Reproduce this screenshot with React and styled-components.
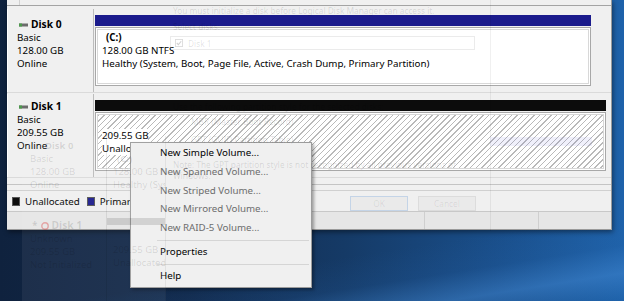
import React from 'react';
import styled, { createGlobalStyle } from 'styled-components';

const Global = createGlobalStyle`
  html, body { margin: 0; padding: 0; }
  body {
    width: 624px; height: 301px; overflow: hidden;
    font-family: "Noto Sans", "DejaVu Sans", sans-serif;
    font-size: 9.75px; color: #000;
  }
`;

const Desktop = styled.div`
  position: relative;
  width: 624px;
  height: 301px;
  overflow: hidden;
  box-sizing: border-box;
  padding-left: 7px;
  background:
    linear-gradient(-9deg, rgba(0,0,0,0) 0%, rgba(70,140,215,0.45) 7%, rgba(40,100,170,0.15) 14%, rgba(0,0,0,0) 22%),
    linear-gradient(90deg, #0f223e 0%, #122a4c 30%, #153a66 55%, #194d88 78%, #1e62aa 100%);
`;

const Window = styled.div`
  width: 605px;
  height: 230px;
  box-sizing: border-box;
  background: #f0f0f0;
  border-right: 1px solid #9a9a9a;
  border-bottom: 1px solid #9a9a9a;
  display: flex;
  flex-direction: column;
  box-shadow: 1px 2px 5px rgba(0,0,0,0.45);
`;

const TopStrip = styled.div`
  height: 5px;
  flex: none;
  border-bottom: 1px solid #a4a4a4;
  display: flex;
`;

const TopCol = styled.div`
  width: 12px;
  border-right: 1px solid #d2d2d2;
`;

const DiskList = styled.div`
  display: flex;
  flex-direction: column;
  gap: 1px;
  padding-top: 3px;
  height: 179px;
  flex: none;
  box-sizing: border-box;
  border-bottom: 1px solid #c4c4c4;
`;

const DiskRow = styled.div`
  display: flex;
  height: 83px;
  flex: none;
  border-bottom: 1px solid #dadada;
`;

const Label = styled.div`
  width: 87px;
  flex: none;
  box-sizing: border-box;
  padding: ${p => p.$top}px 0 0 9px;
  border-right: 1px solid #bcbcbc;
  border-left: 1px solid #ffffff;
  line-height: 13px;
`;

const DiskName = styled.div`
  display: flex;
  align-items: center;
  gap: 3px;
  font-weight: 700;
  font-size: 10.25px;
  margin-left: 2px;
`;

const Line = styled.div`
  white-space: nowrap;
  ${p => p.$bold && 'font-weight: 700;'}
  ${p => p.$indent && `padding-left: ${p.$indent}px;`}
`;

const Parts = styled.div`
  display: flex;
  flex-direction: column;
  padding: 6px 0 0 1px;
  width: ${p => p.$w}px;
`;

const Bar = styled.div`
  height: 11px;
  background: ${p => p.$color};
`;

const Box = styled.div`
  margin-top: 1px;
  height: 59px;
  box-sizing: border-box;
  border: 1px solid #a8a8a8;
  box-shadow: inset 0 0 0 1px #ffffff, inset 0 0 0 2px #d8d8d8;
  padding: 3px 0 0 6px;
  line-height: 13px;
  background: ${p => p.$hatch
    ? 'repeating-linear-gradient(135deg, #ffffff 0px, #ffffff 3px, #b9b9b9 3px, #b9b9b9 4px)'
    : '#ffffff'};
`;

const PartText = styled.span`
  background: #ffffff;
`;

const Spacer = styled.div`
  height: 5px;
  flex: none;
`;

const Legend = styled.div`
  height: 22px;
  flex: none;
  box-sizing: border-box;
  border-top: 1px solid #d0d0d0;
  border-bottom: 1px solid #c8c8c8;
  display: flex;
  align-items: center;
  padding-left: 5px;
  gap: 5px;
`;

const Swatch = styled.span`
  width: 8px;
  height: 9px;
  background: ${p => p.$color};
  border: 1px solid #555;
  box-sizing: border-box;
  margin-left: ${p => p.$gap || 0}px;
`;

const Status = styled.div`
  flex: 1;
  display: flex;
  background: #e6e6e6;
`;

const StatusCell = styled.div`
  width: ${p => p.$w}px;
  border-right: 1px solid #cfcfcf;
`;

const Menu = styled.div`
  position: absolute;
  left: 130px;
  top: 142px;
  width: 182px;
  height: 146px;
  box-sizing: border-box;
  background: #f0f0f0;
  border: 1px solid #9c9c9c;
  box-shadow: 2px 2px 3px rgba(0,0,0,0.35);
  padding: 1px 2px 1px 2px;
  display: flex;
  flex-direction: column;
`;

const Item = styled.div`
  height: 18.75px;
  line-height: 18.75px;
  padding-left: 27px;
  color: ${p => (p.$disabled ? '#6d6d6d' : '#000')};
  white-space: nowrap;
`;

const Sep = styled.div`
  height: 7px;
  display: flex;
  align-items: center;
  padding-left: 24px;
  &::after {
    content: '';
    flex: 1;
    height: 1px;
    background: #d5d5d5;
  }
`;

/* ghosts of a fading window, laid over everything */
const Ghost = styled.div`
  position: absolute;
  left: ${p => p.$x}px;
  top: ${p => p.$y}px;
  width: ${p => p.$w}px;
  height: ${p => p.$h}px;
  overflow: hidden;
  box-sizing: border-box;
  pointer-events: none;
  color: rgba(0,0,0,0.13);
  background: ${p => p.$bg || 'transparent'};
  border-right: 1px solid rgba(0,0,0,0.06);
  line-height: ${p => p.$lh || 13}px;
  font-size: ${p => p.$fs || 9.5}px;
`;

const GhostCol = styled.div`
  display: flex;
  flex-direction: column;
  padding: ${p => p.$pad};
`;

const GhostText = styled.div`
  white-space: nowrap;
  margin: ${p => p.$m || 0};
`;

const GhostBox = styled.div`
  margin: ${p => p.$m};
  width: ${p => p.$w}px;
  height: ${p => p.$h}px;
  border: 1px solid rgba(0,0,0,0.08);
  display: flex;
  align-items: center;
  gap: 5px;
  padding-left: 4px;
  box-sizing: border-box;
`;

const GhostButtons = styled.div`
  display: flex;
  gap: 10px;
  margin: 15px 0 0 177px;
`;

const GhostBtn = styled.div`
  width: 58px;
  height: 15px;
  box-sizing: border-box;
  border: 1px solid ${p => (p.$def ? 'rgba(0,100,220,0.16)' : 'rgba(0,0,0,0.06)')};
  background: rgba(0,0,0,0.025);
  display: flex;
  align-items: center;
  justify-content: center;
  color: rgba(0,0,0,0.09);
`;

const GhostHilite = styled.div`
  position: absolute;
  left: 490px;
  top: 137px;
  width: 102px;
  height: 9px;
  background: rgba(120,120,220,0.11);
  pointer-events: none;
`;

const GhostRow = styled.div`
  display: flex;
  height: ${p => p.$h}px;
`;

const GhostLabel = styled.div`
  width: 85px;
  flex: none;
  padding: ${p => p.$pad};
  border-right: 1px solid rgba(0,0,0,0.08);
  box-sizing: border-box;
`;

const GhostPart = styled.div`
  padding: ${p => p.$pad};
  flex: 1;
`;

const GhostBar = styled.div`
  height: 7px;
  width: 58px;
  background: rgba(0,0,0,0.12);
  margin-bottom: 3px;
`;

const DiskIcon = () => (
  <svg width="9" height="4" viewBox="0 0 9 4">
    <rect x="0" y="0.5" width="9" height="3" fill="#6c6c6c" />
    <rect x="0" y="0.5" width="3" height="3" fill="#4c9a4c" />
  </svg>
);

const RedIcon = () => (
  <svg width="8" height="8" viewBox="0 0 8 8">
    <circle cx="4" cy="4" r="3.2" fill="none" stroke="rgba(220,40,40,0.35)" strokeWidth="1.4" />
  </svg>
);

const Check = () => (
  <svg width="8" height="8" viewBox="0 0 9 9">
    <rect x="0.5" y="0.5" width="8" height="8" fill="none" stroke="rgba(0,0,0,0.14)" />
    <path d="M2 4.5 L3.8 6.3 L7 2.5" fill="none" stroke="rgba(0,0,0,0.18)" strokeWidth="1.2" />
  </svg>
);

export default function App() {
  const menu = [
    { t: 'New Simple Volume...' },
    { t: 'New Spanned Volume...', d: true },
    { t: 'New Striped Volume...', d: true },
    { t: 'New Mirrored Volume...', d: true },
    { t: 'New RAID-5 Volume...', d: true },
  ];
  return (
    <>
      <Global />
      <Desktop>
        <Window>
          <TopStrip><TopCol /></TopStrip>
          <DiskList>
            <DiskRow>
              <Label $top={9}>
                <DiskName><DiskIcon />Disk 0</DiskName>
                <Line>Basic</Line>
                <Line>128.00 GB</Line>
                <Line>Online</Line>
              </Label>
              <Parts $w={496}>
                <Bar $color="#1b1b8c" />
                <Box>
                  <Line $bold $indent={4}>(C:)</Line>
                  <Line>128.00 GB NTFS</Line>
                  <Line>Healthy (System, Boot, Page File, Active, Crash Dump, Primary Partition)</Line>
                </Box>
              </Parts>
            </DiskRow>
            <DiskRow>
              <Label $top={6}>
                <DiskName><DiskIcon />Disk 1</DiskName>
                <Line>Basic</Line>
                <Line>209.55 GB</Line>
                <Line>Online</Line>
              </Label>
              <Parts $w={511}>
                <Bar $color="#0c0c0c" />
                <Box $hatch>
                  <Line>&nbsp;</Line>
                  <Line><PartText>209.55 GB</PartText></Line>
                  <Line><PartText>Unallocated</PartText></Line>
                </Box>
              </Parts>
            </DiskRow>
          </DiskList>
          <Spacer />
          <Legend>
            <Swatch $color="#0c0c0c" />
            <span>Unallocated</span>
            <Swatch $color="#1b1b8c" $gap={2} />
            <span>Primary partition</span>
          </Legend>
          <Status>
            <StatusCell $w={417} />
            <StatusCell $w={113} />
          </Status>
        </Window>

        <Menu>
          {menu.map(m => (
            <Item key={m.t} $disabled={m.d}>{m.t}</Item>
          ))}
          <Sep />
          <Item>Properties</Item>
          <Sep />
          <Item>Help</Item>
        </Menu>

        <Ghost $x={160} $y={0} $w={331} $h={231} $fs={8.3} $lh={11}>
          <GhostCol $pad="5px 0 0 13px">
            <GhostText>You must initialize a disk before Logical Disk Manager can access it.</GhostText>
            <GhostText $m="5px 0 0 0">Select disks:</GhostText>
            <GhostBox $m="4px 0 0 -3px" $w={305} $h={14}><Check />Disk 1</GhostBox>
            <GhostText $m="51px 0 0 0">Use the following partition style for the selected disks:</GhostText>
            <GhostText $m="4px 0 0 18px">MBR (Master Boot Record)</GhostText>
            <GhostText $m="7px 0 0 18px">GPT (GUID Partition Table)</GhostText>
            <GhostText $m="14px 0 0 0">Note: The GPT partition style is not recognized by all previous versions of</GhostText>
            <GhostText>Windows.</GhostText>
            <GhostButtons>
              <GhostBtn $def>OK</GhostBtn>
              <GhostBtn>Cancel</GhostBtn>
            </GhostButtons>
          </GhostCol>
        </Ghost>
        <GhostHilite />

        <Ghost $x={22} $y={136} $w={144} $h={165} $bg="rgba(255,255,255,0.06)">
          <GhostRow $h={76}>
            <GhostLabel $pad="3px 0 0 8px">
              <Line $bold $indent={15}>Disk 0</Line>
              <Line>Basic</Line>
              <Line>128.00 GB</Line>
              <Line>Online</Line>
            </GhostLabel>
            <GhostPart $pad="16px 0 0 6px">
              <Line $bold $indent={4}>(C:)</Line>
              <Line>128.00 GB NTFS</Line>
              <Line>Healthy (System, Boot, Page File, Active, Crash Dump, Primary Partition)</Line>
            </GhostPart>
          </GhostRow>
          <GhostRow $h={89}>
            <GhostLabel $pad="7px 0 0 8px">
              <DiskName>*<RedIcon />Disk 1</DiskName>
              <Line>Unknown</Line>
              <Line>209.55 GB</Line>
              <Line>Not Initialized</Line>
            </GhostLabel>
            <GhostPart $pad="6px 0 0 0">
              <GhostBar />
              <GhostCol $pad="15px 0 0 6px">
                <Line>209.55 GB</Line>
                <Line>Unallocated</Line>
              </GhostCol>
            </GhostPart>
          </GhostRow>
        </Ghost>
      </Desktop>
    </>
  );
}
